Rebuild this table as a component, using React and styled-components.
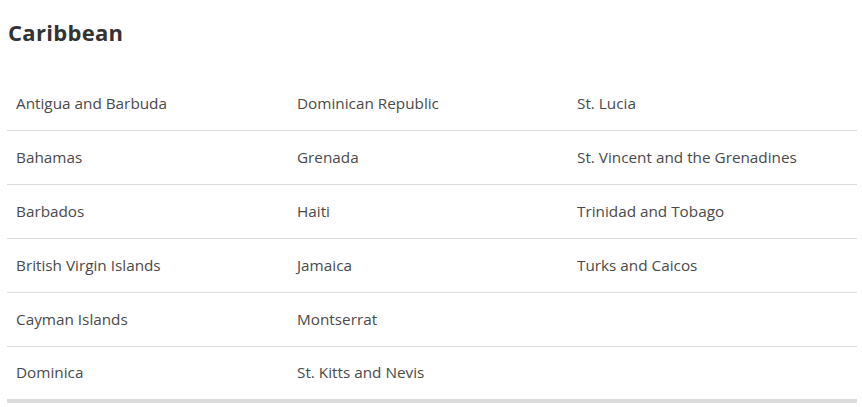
import React from 'react';
import styled, { createGlobalStyle } from 'styled-components';

const GlobalStyle = createGlobalStyle`
  body {
    margin: 0;
    background: #fff;
    font-family: "Open Sans", "Liberation Sans", sans-serif;
  }
`;

const Page = styled.div`
  padding: 0 5px 0 7px;
`;

const Title = styled.h2`
  margin: 0;
  padding: 18px 0 0 1px;
  height: 77px;
  box-sizing: border-box;
  font-size: 22px;
  line-height: 28px;
  font-weight: 700;
  color: #333;
  letter-spacing: 0.3px;
`;

const Grid = styled.div`
  display: grid;
  grid-template-columns: 281px 280px 1fr;
  border-bottom: 4px solid #dcdcdc;
`;

const Cell = styled.div`
  height: ${({ $last }) => ($last ? '52px' : '54px')};
  box-sizing: border-box;
  display: flex;
  align-items: center;
  padding: 0 9px 2px;
  font-size: 15.3px;
  color: #4a4a4a;
  border-bottom: ${({ $last }) => ($last ? 'none' : '1px solid #dcdcdc')};
`;

const rows = [
  ['Antigua and Barbuda', 'Dominican Republic', 'St. Lucia'],
  ['Bahamas', 'Grenada', 'St. Vincent and the Grenadines'],
  ['Barbados', 'Haiti', 'Trinidad and Tobago'],
  ['British Virgin Islands', 'Jamaica', 'Turks and Caicos'],
  ['Cayman Islands', 'Montserrat', ''],
  ['Dominica', 'St. Kitts and Nevis', ''],
];

export default function App() {
  return (
    <Page>
      <GlobalStyle />
      <Title>Caribbean</Title>
      <Grid>
        {rows.map((row, i) =>
          row.map((name, j) => (
            <Cell key={`${i}-${j}`} $last={i === rows.length - 1}>
              {name}
            </Cell>
          ))
        )}
      </Grid>
    </Page>
  );
}
